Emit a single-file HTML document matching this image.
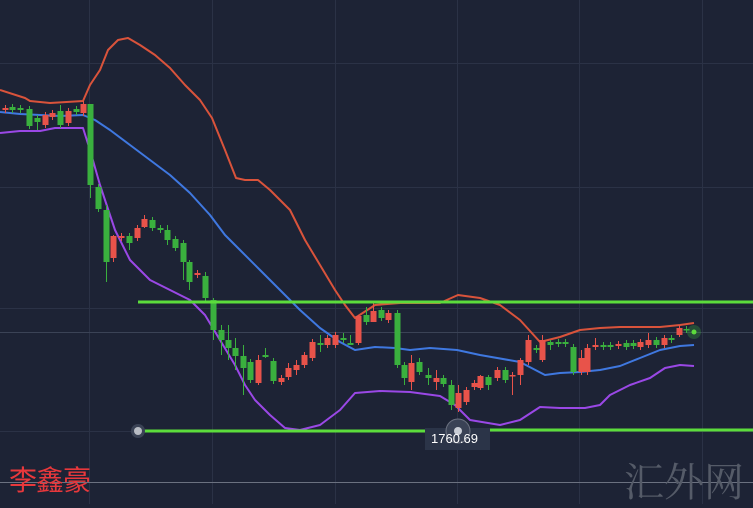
<!DOCTYPE html>
<html><head><meta charset="utf-8"><style>
html,body{margin:0;padding:0;background:#1d2335;width:753px;height:504px;overflow:hidden}
#c{position:absolute;left:0;top:0}
.t{position:absolute;font-family:"Liberation Sans","Noto Sans CJK SC",sans-serif}
</style></head><body>
<svg id="c" width="753" height="504" xmlns="http://www.w3.org/2000/svg">
<rect width="753" height="504" fill="#1d2335"/>
<g stroke="#2b3246" stroke-width="1">
<line x1="89.5" y1="0" x2="89.5" y2="504"/><line x1="212.5" y1="0" x2="212.5" y2="504"/>
<line x1="335.5" y1="0" x2="335.5" y2="504"/><line x1="457.5" y1="0" x2="457.5" y2="504"/>
<line x1="579.5" y1="0" x2="579.5" y2="504"/><line x1="702.5" y1="0" x2="702.5" y2="504"/>
<line x1="0" y1="63.5" x2="753" y2="63.5"/><line x1="0" y1="187.5" x2="753" y2="187.5"/>
<line x1="0" y1="308.5" x2="753" y2="308.5"/><line x1="0" y1="431.5" x2="753" y2="431.5"/>
</g>
<line x1="0" y1="332.5" x2="753" y2="332.5" stroke="#3b4356"/>
<line x1="0" y1="482.5" x2="753" y2="482.5" stroke="#6b7180"/>
<g fill="none" stroke-width="2" stroke-linejoin="round">
<polyline stroke="#d9533b" points="0,90 25,98 30,101 50,103 83,101 90,85 100,70 108,50 118,40 128,38 140,45 155,55 170,68 185,85 200,100 212,118 225,150 236,178 245,180 258,180 270,190 290,210 305,240 320,265 335,290 345,305 355,318 375,305 400,303 440,303 458,295 480,298 500,305 520,320 540,342 560,337 580,330 600,328 620,327 660,327 680,325 694,323"/>
<polyline stroke="#3f78e0" points="0,112 20,114 60,116 83,115 95,120 110,130 130,145 150,160 170,175 190,193 210,215 225,235 240,250 260,270 280,290 300,310 320,328 340,342 355,350 375,347 395,348 410,350 430,348 457,350 480,355 520,362 545,375 560,373 580,372 600,370 620,366 640,358 660,350 680,346 694,345"/>
<polyline stroke="#9a48e6" points="0,133 20,131 40,131 55,128 83,128 90,150 100,185 115,230 130,260 150,280 170,290 190,300 205,315 220,340 235,365 245,385 255,400 270,415 285,428 300,430 320,425 340,410 355,393 380,391 410,392 440,396 455,405 470,420 500,425 520,420 540,407 560,408 585,408 600,405 610,395 630,385 650,378 665,368 680,365 694,366"/>
</g>
<g id="cd"></g>
<line x1="138" y1="302" x2="753" y2="302" stroke="#5cdc3c" stroke-width="3"/>
<line x1="138" y1="431" x2="425" y2="431" stroke="#5cdc3c" stroke-width="3"/>
<line x1="490" y1="430" x2="753" y2="430" stroke="#5cdc3c" stroke-width="3"/>
<circle cx="138" cy="431" r="7" fill="#3a4255"/><circle cx="138" cy="431" r="4" fill="#b8bcc4"/>
<rect x="425" y="428" width="65" height="22" fill="#2b3448"/>
<circle cx="458" cy="431" r="12" fill="#3a4255" stroke="#6b7180"/><circle cx="458" cy="431" r="4" fill="#c8ccd4"/>
<circle cx="694" cy="332" r="7" fill="#3ab03e" opacity="0.3"/><circle cx="694" cy="332" r="2.5" fill="#5cdc3c"/>
</svg>
<div class="t" style="left:431px;top:431px;color:#fff;font-size:13px">1760.69</div>
<div class="t" style="left:9px;top:459px;color:#e8383c;font-size:28px;letter-spacing:-1px">李鑫豪</div>
<div class="t" style="left:624px;top:451px;color:#555b68;font-size:40px;font-family:'Noto Serif CJK SC',serif">汇外网</div>
<script>
var d=[[5,108,110,'r'],[12,107,110,'g'],[20,108,110,'g'],[29,109,126,'g'],[37,118,122,'g',115,130],[45,115,125,'r'],[52,113,117,'r'],[60,111,125,'g',105,128],[68,111,123,'r'],[76,109,112,'g'],[83,104,113,'r'],
[90,104,185,'g',104,198],[98,187,209,'g'],[106,210,262,'g',205,282],[113,236,258,'r',235,262],[121,236,238,'r'],[129,236,243,'g',233,250],[137,228,238,'r'],[144,219,227,'r',215,228],[152,220,228,'g'],[160,228,230,'g'],[167,230,240,'g',225,245],[175,239,248,'g'],[183,243,262,'g',240,280],[189,262,282,'g',260,290],[197,273,275,'r'],[205,276,298,'g',272,303],[213,300,330,'g',298,340],[221,330,340,'g',325,355],[228,340,348,'g',325,360],[235,348,356,'g',338,370],[243,356,368,'g',345,395],[250,362,380,'g'],[258,360,383,'r',355,385],[265,355,357,'g',348,358],[273,361,381,'g'],[281,378,382,'r',375,385],[288,368,377,'r',363,380],[296,365,370,'r',360,375],[304,355,365,'r'],[312,342,358,'r'],[320,343,345,'g',335,352],[327,338,345,'r',335,348],[335,335,345,'r'],[343,338,340,'g',333,343],[350,343,345,'g',335,345],[358,316,343,'r',315,345],[366,315,322,'g',307,325],[373,311,322,'r',302,322],[381,310,318,'g'],[388,313,320,'r'],[397,313,365,'g'],[404,365,378,'g',362,385],[411,363,382,'r',355,390],[419,362,372,'g',358,375],[428,375,378,'g',368,385],[436,378,382,'r',370,390],[443,378,384,'g'],[451,385,405,'g',380,410],[458,393,408,'r',385,412],[466,390,402,'r',387,405],[474,383,387,'r'],[480,376,388,'r',375,390],[488,377,385,'g',375,390],[497,370,378,'r'],[505,370,380,'g'],[512,375,376,'r',372,395],[520,360,375,'r',358,385],[528,340,362,'r',335,365],[536,348,350,'g'],[542,340,360,'r',335,362],[550,342,345,'g',340,350],[558,342,344,'g'],[565,342,344,'g'],[573,347,372,'g'],[581,358,372,'r',350,375],[587,348,372,'r',344,375],[595,345,347,'r',338,350],[603,345,347,'g'],[610,345,347,'g'],[618,344,346,'r'],[626,343,347,'g'],[633,343,346,'g'],[640,342,347,'r'],[648,340,345,'r',333,348],[656,340,345,'g'],[664,338,345,'r'],[671,338,340,'g'],[679,328,335,'r',325,337],[686,329,330,'g']];
var s='';d.forEach(function(c){var col=c[3]=='r'?'#e8534a':'#3ab03e';var h1=c[4]||c[1]-3,h2=c[5]||c[2]+3;
s+='<line x1="'+(c[0]+.5)+'" y1="'+h1+'" x2="'+(c[0]+.5)+'" y2="'+h2+'" stroke="'+col+'"/>';
s+='<rect x="'+(c[0]-2.5)+'" y="'+c[1]+'" width="6" height="'+Math.max(1.5,c[2]-c[1])+'" fill="'+col+'"/>';});
document.getElementById('cd').innerHTML=s;
</script>
</body></html>
